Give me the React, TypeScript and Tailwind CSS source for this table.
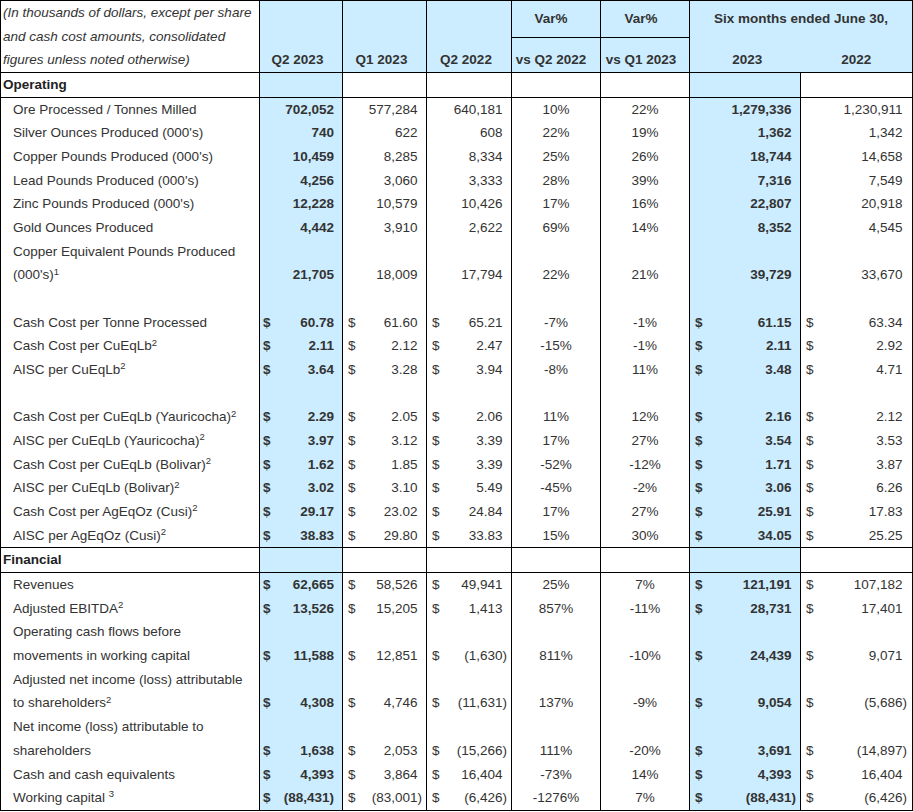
import React from 'react';

type Row =
  | { kind: 'section'; label: string }
  | { kind: 'blank' }
  | { kind: 'data'; label: React.ReactNode; vals: string[]; dollar?: boolean };

const Sup = ({ n }: { n: string }) => <sup className="text-[9.5px]">{n}</sup>;

const rows: Row[] = [
  { kind: 'section', label: 'Operating' },
  { kind: 'data', label: 'Ore Processed / Tonnes Milled', vals: ['702,052', '577,284', '640,181', '10%', '22%', '1,279,336', '1,230,911'] },
  { kind: 'data', label: "Silver Ounces Produced (000's)", vals: ['740', '622', '608', '22%', '19%', '1,362', '1,342'] },
  { kind: 'data', label: "Copper Pounds Produced (000's)", vals: ['10,459', '8,285', '8,334', '25%', '26%', '18,744', '14,658'] },
  { kind: 'data', label: "Lead Pounds Produced (000's)", vals: ['4,256', '3,060', '3,333', '28%', '39%', '7,316', '7,549'] },
  { kind: 'data', label: "Zinc Pounds Produced (000's)", vals: ['12,228', '10,579', '10,426', '17%', '16%', '22,807', '20,918'] },
  { kind: 'data', label: 'Gold Ounces Produced', vals: ['4,442', '3,910', '2,622', '69%', '14%', '8,352', '4,545'] },
  {
    kind: 'data',
    label: (
      <>
        Copper Equivalent Pounds Produced
        <br />
        (000's)<Sup n="1" />
      </>
    ),
    vals: ['21,705', '18,009', '17,794', '22%', '21%', '39,729', '33,670'],
  },
  { kind: 'blank' },
  { kind: 'data', dollar: true, label: 'Cash Cost per Tonne Processed', vals: ['60.78', '61.60', '65.21', '-7%', '-1%', '61.15', '63.34'] },
  { kind: 'data', dollar: true, label: <>Cash Cost per CuEqLb<Sup n="2" /></>, vals: ['2.11', '2.12', '2.47', '-15%', '-1%', '2.11', '2.92'] },
  { kind: 'data', dollar: true, label: <>AISC per CuEqLb<Sup n="2" /></>, vals: ['3.64', '3.28', '3.94', '-8%', '11%', '3.48', '4.71'] },
  { kind: 'blank' },
  { kind: 'data', dollar: true, label: <>Cash Cost per CuEqLb (Yauricocha)<Sup n="2" /></>, vals: ['2.29', '2.05', '2.06', '11%', '12%', '2.16', '2.12'] },
  { kind: 'data', dollar: true, label: <>AISC per CuEqLb (Yauricocha)<Sup n="2" /></>, vals: ['3.97', '3.12', '3.39', '17%', '27%', '3.54', '3.53'] },
  { kind: 'data', dollar: true, label: <>Cash Cost per CuEqLb (Bolivar)<Sup n="2" /></>, vals: ['1.62', '1.85', '3.39', '-52%', '-12%', '1.71', '3.87'] },
  { kind: 'data', dollar: true, label: <>AISC per CuEqLb (Bolivar)<Sup n="2" /></>, vals: ['3.02', '3.10', '5.49', '-45%', '-2%', '3.06', '6.26'] },
  { kind: 'data', dollar: true, label: <>Cash Cost per AgEqOz (Cusi)<Sup n="2" /></>, vals: ['29.17', '23.02', '24.84', '17%', '27%', '25.91', '17.83'] },
  { kind: 'data', dollar: true, label: <>AISC per AgEqOz (Cusi)<Sup n="2" /></>, vals: ['38.83', '29.80', '33.83', '15%', '30%', '34.05', '25.25'] },
  { kind: 'section', label: 'Financial' },
  { kind: 'data', dollar: true, label: 'Revenues', vals: ['62,665', '58,526', '49,941', '25%', '7%', '121,191', '107,182'] },
  { kind: 'data', dollar: true, label: <>Adjusted EBITDA<Sup n="2" /></>, vals: ['13,526', '15,205', '1,413', '857%', '-11%', '28,731', '17,401'] },
  {
    kind: 'data',
    dollar: true,
    label: (
      <>
        Operating cash flows before
        <br />
        movements in working capital
      </>
    ),
    vals: ['11,588', '12,851', '(1,630)', '811%', '-10%', '24,439', '9,071'],
  },
  {
    kind: 'data',
    dollar: true,
    label: (
      <>
        Adjusted net income (loss) attributable
        <br />
        to shareholders<Sup n="2" />
      </>
    ),
    vals: ['4,308', '4,746', '(11,631)', '137%', '-9%', '9,054', '(5,686)'],
  },
  {
    kind: 'data',
    dollar: true,
    label: (
      <>
        Net income (loss) attributable to
        <br />
        shareholders
      </>
    ),
    vals: ['1,638', '2,053', '(15,266)', '111%', '-20%', '3,691', '(14,897)'],
  },
  { kind: 'data', dollar: true, label: 'Cash and cash equivalents', vals: ['4,393', '3,864', '16,404', '-73%', '14%', '4,393', '16,404'] },
  { kind: 'data', dollar: true, label: <>Working capital <Sup n="3" /></>, vals: ['(88,431)', '(83,001)', '(6,426)', '-1276%', '7%', '(88,431)', '(6,426)'] },
];

// per value column: blue background / bold, padding, paren hang
const cols = [
  { blue: true, pct: false, cls: 'bg-[#ccedff] font-bold pl-[3px] pr-[8px]', hang: false },
  { blue: false, pct: false, cls: 'pl-[5px] pr-[4px]', hang: true },
  { blue: false, pct: false, cls: 'pl-[5px] pr-[4px]', hang: true },
  { blue: false, pct: true, cls: 'text-center', hang: false },
  { blue: false, pct: true, cls: 'text-center', hang: false },
  { blue: true, pct: false, cls: 'bg-[#ccedff] font-bold pl-[5px] pr-[4px]', hang: true },
  { blue: false, pct: false, cls: 'pl-[5px] pr-[5px]', hang: true },
];

function Value({ v, dollar, hang }: { v: string; dollar?: boolean; hang: boolean }) {
  const num = (
    <span>
      {v}
      {hang && !v.endsWith(')') && <span className="invisible">)</span>}
    </span>
  );
  if (dollar) {
    return (
      <div className="flex justify-between">
        <span>$</span>
        {num}
      </div>
    );
  }
  return <div className="text-right">{num}</div>;
}

export default function App() {
  const cell = 'border-x border-black align-bottom leading-[23.67px] p-0';
  return (
    <div className="bg-white w-[913px] h-[812px] font-['Liberation_Sans',Arial,sans-serif] text-[13.5px] text-[#333]">
      <table className="w-[913px] table-fixed border-collapse">
        <colgroup>
          <col className="w-[259px]" />
          <col className="w-[83px]" />
          <col className="w-[84px]" />
          <col className="w-[85px]" />
          <col className="w-[89px]" />
          <col className="w-[89px]" />
          <col className="w-[111px]" />
          <col className="w-[112px]" />
        </colgroup>
        <thead>
          <tr className="h-[36px]">
            <th rowSpan={2} className={`${cell} border-y text-left font-normal italic pl-[2px]`}>
              (In thousands of dollars, except per share
              <br />
              and cash cost amounts, consolidated
              <br />
              figures unless noted otherwise)
            </th>
            <th rowSpan={2} className={`${cell} border-y bg-[#ccedff] font-bold text-center pr-[7px]`}>Q2 2023</th>
            <th rowSpan={2} className={`${cell} border-y bg-[#ccedff] font-bold text-center pr-[6px]`}>Q1 2023</th>
            <th rowSpan={2} className={`${cell} border-y bg-[#ccedff] font-bold text-center pr-[6px]`}>Q2 2022</th>
            <th className="border border-black bg-[#ccedff] font-bold text-center align-middle p-0 pr-[10px]">Var%</th>
            <th className="border border-black bg-[#ccedff] font-bold text-center align-middle p-0 pr-[8px]">Var%</th>
            <th colSpan={2} className="border-x border-t border-black bg-[#ccedff] font-bold text-center align-middle p-0">
              Six months ended June 30,
            </th>
          </tr>
          <tr className="h-[35px]">
            <th className={`${cell} border-b bg-[#ccedff] font-bold text-center pr-[10px]`}>vs Q2 2022</th>
            <th className={`${cell} border-b bg-[#ccedff] font-bold text-center pr-[8px]`}>vs Q1 2023</th>
            <th className="border-l border-b border-black bg-[#ccedff] font-bold text-center align-bottom leading-[23.67px] p-0 pl-[4px]">
              2023
            </th>
            <th className="border-r border-b border-black bg-[#ccedff] font-bold text-center align-bottom leading-[23.67px] p-0">
              2022
            </th>
          </tr>
        </thead>
        <tbody>
          {rows.map((r, i) => {
            const last = i === rows.length - 1;
            if (r.kind === 'section') {
              return (
                <tr key={i}>
                  <td className={`${cell} border-y font-bold text-[#222] pl-[2px]`}>{r.label}</td>
                  {cols.map((c, j) => (
                    <td key={j} className={`${cell} border-y ${c.blue ? 'bg-[#ccedff]' : ''}`}>
                      &nbsp;
                    </td>
                  ))}
                </tr>
              );
            }
            if (r.kind === 'blank') {
              return (
                <tr key={i}>
                  <td className={cell}>&nbsp;</td>
                  {cols.map((c, j) => (
                    <td key={j} className={`${cell} ${c.blue ? 'bg-[#ccedff]' : ''}`}>
                      &nbsp;
                    </td>
                  ))}
                </tr>
              );
            }
            return (
              <tr key={i}>
                <td className={`${cell} pl-[12px] ${last ? 'border-b' : ''}`}>{r.label}</td>
                {cols.map((c, j) => (
                  <td key={j} className={`${cell} ${c.cls} ${last ? 'border-b' : ''}`}>
                    {c.pct ? r.vals[j] : <Value v={r.vals[j]} dollar={r.dollar} hang={c.hang} />}
                  </td>
                ))}
              </tr>
            );
          })}
        </tbody>
      </table>
    </div>
  );
}
